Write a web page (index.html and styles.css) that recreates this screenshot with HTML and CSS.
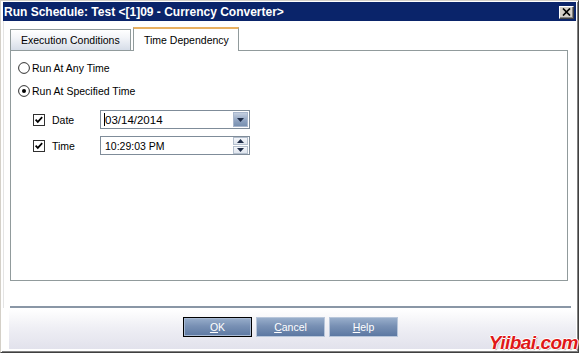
FILE: index.html
```html
<!DOCTYPE html>
<html>
<head>
<meta charset="utf-8">
<link rel="stylesheet" href="styles.css">
</head>
<body>
<div class="window">
  <div class="titlebar">
    <span class="title">Run Schedule: Test &lt;[1]09 - Currency Converter&gt;</span>
    <span class="close"><svg width="9" height="8" viewBox="0 0 9 8"><path d="M1 0.5 L8 7.5 M8 0.5 L1 7.5" stroke="#000" stroke-width="1.7"/></svg></span>
  </div>
  <div class="body">
    <div class="tabs">
      <div class="tab">Execution Conditions</div>
      <div class="tab active">Time Dependency</div>
    </div>
    <div class="panel">
      <div class="row radio-row">
        <svg class="radio" width="12" height="12" viewBox="0 0 12 12"><circle cx="6" cy="6" r="5.4" fill="#fff" stroke="#303030" stroke-width="1"/></svg>
        <span class="lbl">Run At Any Time</span>
      </div>
      <div class="row radio-row second">
        <svg class="radio" width="12" height="12" viewBox="0 0 12 12"><circle cx="6" cy="6" r="5.4" fill="#fff" stroke="#303030" stroke-width="1"/><circle cx="6" cy="6" r="2" fill="#000"/></svg>
        <span class="lbl">Run At Specified Time</span>
      </div>
      <div class="row field-row date-row">
        <svg class="check" width="12" height="12" viewBox="0 0 12 12"><rect x="0.5" y="0.5" width="11" height="11" fill="#fff" stroke="#303030"/><path d="M2.6 5.6 L4.8 7.9 L9.2 3.2" fill="none" stroke="#000" stroke-width="1.7"/></svg>
        <span class="flabel">Date</span>
        <div class="input">
          <span class="value date"><span class="caret"></span>03/14/2014</span>
          <span class="dropbtn"><svg width="7" height="4" viewBox="0 0 7 4"><path d="M0 0 H7 L3.5 4 Z" fill="#1e2c48"/></svg></span>
        </div>
      </div>
      <div class="row field-row time-row">
        <svg class="check" width="12" height="12" viewBox="0 0 12 12"><rect x="0.5" y="0.5" width="11" height="11" fill="#fff" stroke="#303030"/><path d="M2.6 5.6 L4.8 7.9 L9.2 3.2" fill="none" stroke="#000" stroke-width="1.7"/></svg>
        <span class="flabel">Time</span>
        <div class="input">
          <span class="value">10:29:03 PM</span>
          <span class="spin">
            <span class="spinbtn"><svg width="7" height="4" viewBox="0 0 7 4"><path d="M0 4 H7 L3.5 0 Z" fill="#1e2c48"/></svg></span>
            <span class="spinbtn"><svg width="7" height="4" viewBox="0 0 7 4"><path d="M0 0 H7 L3.5 4 Z" fill="#1e2c48"/></svg></span>
          </span>
        </div>
      </div>
    </div>
    <div class="separator"></div>
  </div>
  <div class="footer">
    <button class="btn default"><u>O</u>K</button>
    <button class="btn"><u>C</u>ancel</button>
    <button class="btn"><u>H</u>elp</button>
  </div>
  <div class="watermark">Yiibai.com</div>
</div>
</body>
</html>
```
FILE: styles.css
```css
* { box-sizing: border-box; }
html, body { margin: 0; padding: 0; background: #fff; }
body { width: 579px; height: 356px; overflow: hidden; font-family: "Liberation Sans", Arial, sans-serif; font-size: 10.5px; color: #000; }

.window {
  position: relative;
  width: 579px;
  height: 353px;
  display: flex;
  flex-direction: column;
  background: #fff;
  border-top: 1px solid #d4d0c8;
  border-left: 1px solid #d4d0c8;
  border-right: 1px solid #404040;
  border-bottom: 1px solid #404040;
  padding: 1px 2px 3px 2px;
  box-shadow: inset 1px 1px 0 #fff, inset -1px -1px 0 #808080;
}

.titlebar {
  height: 19px;
  background: #0a246a;
  display: flex;
  align-items: center;
  justify-content: space-between;
  padding: 0 2px 0 1px;
  flex: none;
}
.title {
  color: #fff;
  font-weight: bold;
  font-size: 12px;
  white-space: nowrap;
}
.close {
  width: 15px;
  height: 13px;
  background: #d4d0c8;
  border-top: 1px solid #fff;
  border-left: 1px solid #fff;
  border-right: 1px solid #404040;
  border-bottom: 1px solid #404040;
  box-shadow: inset -1px -1px 0 #808080;
  display: flex;
  align-items: center;
  justify-content: center;
  margin-top: 1px;
}

.body {
  flex: none;
  padding: 6px 8px 0 6px;
  border-left: 1px solid #e4e4e4;
}

.tabs {
  display: flex;
  align-items: flex-end;
  gap: 2px;
  height: 24px;
  position: relative;
  z-index: 2;
  margin-bottom: -1px;
}
.tab {
  width: 121px;
  height: 21px;
  border: 1px solid #919b9c;
  border-bottom: none;
  background: linear-gradient(#ffffff, #f2f4f8 40%, #d6dde8);
  padding-left: 10px;
  display: flex;
  align-items: center;
  white-space: nowrap;
  margin-bottom: 1px;
}
.tab.active {
  width: 106px;
  height: 24px;
  background: #fff;
  border-top: 2px solid #e8b060;
  margin-bottom: 0;
  padding-left: 10px;
}

.panel {
  height: 231px;
  border: 1px solid #919b9c;
  background: #fff;
  padding: 8px 0 0 7px;
}

.row {
  display: flex;
  align-items: center;
}
.radio-row { height: 18px; }
.radio-row.second { margin-top: 5px; }
.radio { flex: none; }
.lbl { margin-left: 2px; white-space: nowrap; }

.field-row { height: 19px; padding-left: 15px; }
.date-row { margin-top: 10px; }
.time-row { margin-top: 7px; }
.check { flex: none; }
.flabel { width: 48px; margin-left: 7px; }

.input {
  width: 150px;
  height: 19px;
  border: 1px solid #7f8c99;
  background: #fff;
  display: flex;
  align-items: center;
  justify-content: space-between;
  padding: 1px;
}
.value { padding-left: 3px; white-space: nowrap; }
.value.date { padding-left: 2px; font-size: 11.5px; display: flex; align-items: center; }
.caret { display: inline-block; width: 1px; height: 13px; background: #000; margin-right: 0; }
.dropbtn {
  width: 15px;
  height: 15px;
  background: linear-gradient(#c4cfe0, #8ea2c0 60%, #7890b0);
  border: 1px solid #a8b6cc;
  display: flex;
  align-items: center;
  justify-content: center;
}
.spin {
  width: 15px;
  height: 17px;
  display: flex;
  flex-direction: column;
  gap: 1px;
}
.spinbtn {
  flex: 1;
  background: linear-gradient(#f4f6fa, #dfe5ee);
  border: 1px solid #b4bfcd;
  display: flex;
  align-items: center;
  justify-content: center;
}

.separator {
  height: 2px;
  background: #8a97a6;
  margin-top: 25px;
  margin-right: -3px;
}

.footer {
  flex: 1;
  margin: 1px 0 0 6px;
  background: linear-gradient(#ffffff, #eeeef4 50%, #e2e2ec);
  display: flex;
  justify-content: center;
  align-items: flex-start;
  gap: 4px;
  padding-top: 8px;
  padding-right: 4px;
}
.btn {
  width: 69px;
  height: 20px;
  font-family: "Liberation Sans", Arial, sans-serif;
  font-size: 10.5px;
  color: #fff;
  border: 1px solid #b8c6da;
  background: linear-gradient(#98aecb, #7890b4 45%, #5c78a2);
  padding: 0;
  margin: 0;
}
.btn.default {
  border: 1px solid #000;
  box-shadow: inset 0 0 0 1px #a8bad4;
}

.watermark {
  position: absolute;
  right: 0;
  bottom: -2px;
  font-family: "Liberation Sans", Arial, sans-serif;
  font-style: italic;
  font-weight: bold;
  font-size: 19px;
  color: #e01818;
  letter-spacing: -0.5px;
  text-shadow: 1px 0 0 #fff, -1px 0 0 #fff, 0 1px 0 #fff, 0 -1px 0 #fff, 1px 1px 1px #888;
}
```
